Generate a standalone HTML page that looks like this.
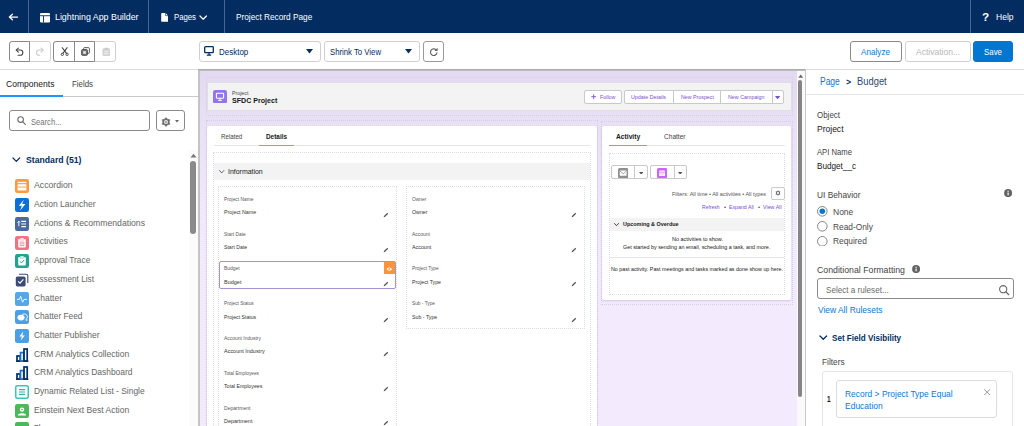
<!DOCTYPE html>
<html lang="en"><head><meta charset="utf-8"><title>Lightning App Builder - Project Record Page</title>
<style>
html,body{margin:0;padding:0;}
body{width:1024px;height:426px;overflow:hidden;position:relative;background:#fff;font-family:"Liberation Sans", sans-serif;}
#app{position:absolute;left:0;top:0;width:1024px;height:426px;overflow:hidden;}
#app div,#app svg,#app span.t{position:absolute;box-sizing:border-box;}
#app span.t{white-space:nowrap;transform-origin:0 0;}
</style></head><body><div id="app">
<div style="left:0px;top:0px;width:1024px;height:33px;background:#032d60;"></div>
<div style="left:28px;top:0px;width:1px;height:33px;background:rgba(255,255,255,.28);"></div>
<div style="left:148px;top:0px;width:1px;height:33px;background:rgba(255,255,255,.28);"></div>
<div style="left:224px;top:0px;width:1px;height:33px;background:rgba(255,255,255,.28);"></div>
<div style="left:970px;top:0px;width:1px;height:33px;background:rgba(255,255,255,.28);"></div>
<svg style="left:8px;top:12.2px;" width="11" height="10" viewBox="0 0 11 10"><path d="M9.6 5H1.6M4.4 2.2L1.4 5L4.4 7.8" fill="none" stroke="#fff" stroke-width="1.25" stroke-linecap="round" stroke-linejoin="round"/></svg>
<svg style="left:39.5px;top:12.5px;" width="10" height="10" viewBox="0 0 10 10"><rect x="0" y="0" width="10" height="9.5" rx="1.2" fill="#fff"/><rect x="0" y="2.3" width="10" height="0.9" fill="#032d60"/><rect x="3" y="3" width="0.9" height="6.5" fill="#032d60"/></svg>
<span id="t0" class="t" style="left:54.5px;top:11.27px;font-size:9.6px;line-height:11.52px;color:#fff;font-weight:400;transform:scaleX(0.9207);">Lightning App Builder</span>
<svg style="left:160.8px;top:13.1px;" width="7.4" height="8.8" viewBox="0 0 8 10"><path d="M1 0H5L8 3V9.2Q8 10 7.2 10H0.8Q0 10 0 9.2V1Q0 0 1 0Z" fill="#fff"/><path d="M5 0V3H8" fill="none" stroke="#032d60" stroke-width="0.7"/></svg>
<span id="t1" class="t" style="left:174px;top:11.27px;font-size:9.6px;line-height:11.52px;color:#fff;font-weight:400;transform:scaleX(0.8087);">Pages</span>
<svg style="left:199.4px;top:14.6px;" width="9" height="6" viewBox="0 0 9 6"><path d="M1 1L4.2 4.2L7.4 1" fill="none" stroke="#fff" stroke-width="1.25" stroke-linecap="round" stroke-linejoin="round"/></svg>
<span id="t2" class="t" style="left:235.5px;top:11.27px;font-size:9.6px;line-height:11.52px;color:#fff;font-weight:400;transform:scaleX(0.8613);">Project Record Page</span>
<span id="t3" class="t" style="left:982.4px;top:10.48px;font-size:11.6px;line-height:13.92px;color:#fff;font-weight:700;transform:scaleX(1.015);">?</span>
<span id="t4" class="t" style="left:995.5px;top:11.27px;font-size:9.6px;line-height:11.52px;color:#fff;font-weight:400;transform:scaleX(0.8868);">Help</span>
<div style="left:0px;top:33px;width:1024px;height:36px;background:#fff;"></div>
<div style="left:0px;top:69px;width:198px;height:1px;background:#dcdcdc;"></div>
<div style="left:806px;top:69px;width:218px;height:1px;background:#dcdcdc;"></div>
<div style="left:8.5px;top:40.5px;width:42.0px;height:21.0px;border:1px solid #d0d0d0;border-radius:3px;background:#fff;"></div>
<div style="left:8.5px;top:40.5px;width:21.5px;height:21.0px;border:1px solid #8a8a8a;border-radius:3px 0 0 3px;background:#fff;"></div>
<svg style="left:14.8px;top:46.8px;" width="9.4" height="9.4" viewBox="0 0 11 11"><path d="M1.6 3.6H6.2A3 3 0 0 1 6.2 9.6H3.6" fill="none" stroke="#444" stroke-width="1.25" stroke-linecap="round"/><path d="M3.9 1.2L1.4 3.6L3.9 6" fill="none" stroke="#444" stroke-width="1.25" stroke-linecap="round" stroke-linejoin="round"/></svg>
<svg style="left:35.3px;top:46.8px;" width="9.4" height="9.4" viewBox="0 0 11 11"><path d="M9.4 3.6H4.8A3 3 0 0 0 4.8 9.6H5.6" fill="none" stroke="#c9c9c9" stroke-width="1.2" stroke-linecap="round"/><path d="M7.1 1.2L9.6 3.6L7.1 6" fill="none" stroke="#c9c9c9" stroke-width="1.2" stroke-linecap="round" stroke-linejoin="round"/></svg>
<div style="left:53px;top:40.5px;width:63px;height:21.0px;border:1px solid #d0d0d0;border-radius:3px;background:#fff;"></div>
<div style="left:53px;top:40.5px;width:42px;height:21.0px;border:1px solid #8a8a8a;border-radius:3px 0 0 3px;background:#fff;"></div>
<div style="left:74px;top:40.5px;width:1px;height:21px;background:#8a8a8a;"></div>
<svg style="left:59.5px;top:46.8px;" width="9.4" height="9.4" viewBox="0 0 11 11"><path d="M2.6 0.8L7.6 7.4M8.4 0.8L3.4 7.4" fill="none" stroke="#444" stroke-width="1.2" stroke-linecap="round"/><circle cx="2.7" cy="8.6" r="1.4" fill="none" stroke="#444" stroke-width="1.1"/><circle cx="8.3" cy="8.6" r="1.4" fill="none" stroke="#444" stroke-width="1.1"/></svg>
<svg style="left:80.6px;top:46.8px;" width="9" height="9" viewBox="0 0 11 11"><rect x="3.2" y="0.8" width="7" height="7" rx="1" fill="#fff" stroke="#444" stroke-width="1.1"/><rect x="0.8" y="3.2" width="7" height="7" rx="1" fill="#777" stroke="#444" stroke-width="1.1"/><rect x="2.6" y="5" width="3.4" height="3.4" fill="#ddd"/></svg>
<svg style="left:101.8px;top:46.6px;" width="8.6" height="9.4" viewBox="0 0 11 12"><rect x="1.2" y="2.2" width="8.6" height="9" rx="1" fill="#d8d8d8" stroke="#c9c9c9" stroke-width="1"/><rect x="3.4" y="0.8" width="4.2" height="2.6" rx="0.6" fill="#c9c9c9"/><path d="M3 6H8M3 8.4H8" stroke="#f3f3f3" stroke-width="0.9"/></svg>
<div style="left:198.5px;top:40.5px;width:122.0px;height:21.0px;border:1px solid #d0d0d0;border-radius:3px;background:#fff;"></div>
<svg style="left:204px;top:46px;" width="10" height="10" viewBox="0 0 10 10"><rect x="0.7" y="0.7" width="8.6" height="6" rx="0.8" fill="none" stroke="#032d60" stroke-width="1.3"/><path d="M5 6.7V8.6M2.8 9.1H7.2" stroke="#032d60" stroke-width="1.2"/></svg>
<span id="t5" class="t" style="left:218.75px;top:45.87px;font-size:9.6px;line-height:11.52px;color:#032d60;font-weight:400;transform:scaleX(0.8309);">Desktop</span>
<svg style="left:305.5px;top:49px;" width="7" height="5" viewBox="0 0 7 5"><path d="M0 0H7L3.5 4.6Z" fill="#032d60"/></svg>
<div style="left:324px;top:40.5px;width:95.5px;height:21.0px;border:1px solid #d0d0d0;border-radius:3px;background:#fff;"></div>
<span id="t6" class="t" style="left:330px;top:45.87px;font-size:9.6px;line-height:11.52px;color:#032d60;font-weight:400;transform:scaleX(0.8081);">Shrink To View</span>
<svg style="left:405px;top:49px;" width="7" height="5" viewBox="0 0 7 5"><path d="M0 0H7L3.5 4.6Z" fill="#032d60"/></svg>
<div style="left:423px;top:40.5px;width:21px;height:21.0px;border:1px solid #9a9a9a;border-radius:3px;background:#fff;"></div>
<svg style="left:428.8px;top:46.6px;" width="9.4" height="9.4" viewBox="0 0 10 10"><path d="M7.6 3.1A3.5 3.5 0 1 0 8.5 6.3" fill="none" stroke="#666" stroke-width="1.25" stroke-linecap="round"/><path d="M9.2 0.8V4.2H5.8Z" fill="#666"/></svg>
<div style="left:849.5px;top:40.5px;width:52.0px;height:21.0px;border:1px solid #8a8a8a;border-radius:3px;background:#fff;"></div>
<span id="t7" class="t" style="left:861px;top:46.37px;font-size:9.6px;line-height:11.52px;color:#0b77d6;font-weight:400;transform:scaleX(0.8494);">Analyze</span>
<div style="left:904.5px;top:40.5px;width:66.0px;height:21.0px;border:1px solid #d0d0d0;border-radius:3px;background:#fff;"></div>
<span id="t8" class="t" style="left:915.5px;top:46.37px;font-size:9.6px;line-height:11.52px;color:#b8b8b8;font-weight:400;transform:scaleX(0.8872);">Activation...</span>
<div style="left:973px;top:40.5px;width:40px;height:21.0px;border:1px solid #0176d3;border-radius:3px;background:#0176d3;"></div>
<span id="t9" class="t" style="left:984px;top:46.37px;font-size:9.6px;line-height:11.52px;color:#fff;font-weight:400;transform:scaleX(0.8229);">Save</span>
<span id="t10" class="t" style="left:6px;top:78.39px;font-size:9.4px;line-height:11.28px;color:#181818;font-weight:400;transform:scaleX(0.9124);">Components</span>
<span id="t11" class="t" style="left:71.5px;top:78.39px;font-size:9.4px;line-height:11.28px;color:#444444;font-weight:400;transform:scaleX(0.8395);">Fields</span>
<div style="left:0px;top:96px;width:198px;height:1px;background:#c9c9c9;"></div>
<div style="left:0px;top:95px;width:63px;height:2px;background:#1b96ff;"></div>
<div style="left:8.5px;top:109.8px;width:141.5px;height:21.60000000000001px;border:1px solid #8a8a8a;border-radius:3px;background:#fff;"></div>
<svg style="left:16.5px;top:116.4px;" width="9" height="9" viewBox="0 0 9 9"><circle cx="3.6" cy="3.6" r="2.8" fill="none" stroke="#6b6b6b" stroke-width="1.1"/><path d="M5.7 5.7L8.3 8.3" stroke="#6b6b6b" stroke-width="1.2" stroke-linecap="round"/></svg>
<span id="t12" class="t" style="left:30.5px;top:115.59px;font-size:9.4px;line-height:11.28px;color:#747474;font-weight:400;transform:scaleX(0.8127);">Search...</span>
<div style="left:155.5px;top:109.8px;width:29.5px;height:21.60000000000001px;border:1px solid #8a8a8a;border-radius:3px;background:#fff;"></div>
<svg style="left:161.1px;top:116.6px;" width="10" height="10" viewBox="0 0 10 10"><polygon points="5.00,0.50 6.55,2.32 8.90,2.75 8.10,5.00 8.90,7.25 6.55,7.68 5.00,9.50 3.45,7.68 1.10,7.25 1.90,5.00 1.10,2.75 3.45,2.32" fill="#6b6b6b" stroke="#6b6b6b" stroke-width="0.6" stroke-linejoin="round"/><circle cx="5" cy="5" r="2" fill="#fff"/><circle cx="5" cy="5" r="0.9" fill="none" stroke="#6b6b6b" stroke-width="0.7"/></svg>
<svg style="left:174.6px;top:120.3px;" width="4" height="2.6" viewBox="0 0 4 2.6"><path d="M0 0H4L2 2.6Z" fill="#666"/></svg>
<svg style="left:11.8px;top:157.3px;" width="9" height="6" viewBox="0 0 9 6"><path d="M1 1L4.3 4.3L7.6 1" fill="none" stroke="#032d60" stroke-width="1.2" stroke-linecap="round" stroke-linejoin="round"/></svg>
<span id="t13" class="t" style="left:26px;top:154.39px;font-size:9.4px;line-height:11.28px;color:#032d60;font-weight:700;transform:scaleX(0.9262);">Standard (51)</span>
<div style="left:189px;top:150px;width:9px;height:276px;background:#fbfbfb;"></div>
<svg style="left:189.8px;top:153.2px;" width="7" height="5" viewBox="0 0 7 5"><path d="M0.5 4.5L3.5 0.8L6.5 4.5Z" fill="#777"/></svg>
<div style="left:190px;top:161px;width:6.4px;height:72.6px;background:#8a8a8a;border-radius:3.2px;"></div>
<svg style="left:15px;top:179.4px;" width="14" height="14" viewBox="0 0 14 14"><rect x="0" y="0" width="14" height="14" rx="2.2" fill="#ff9a3c"/><rect x="2.6" y="2.8" width="8.8" height="1.3" fill="#fff"/><rect x="2.6" y="5.2" width="8.8" height="6.2" rx="0.5" fill="#fff"/><rect x="2.6" y="7.6" width="8.8" height="0.9" fill="#ff9a3c"/></svg>
<span id="t14" class="t" style="left:34px;top:179.39px;font-size:9.4px;line-height:11.28px;color:#666;font-weight:400;transform:scaleX(0.928);">Accordion</span>
<svg style="left:15px;top:198.1px;" width="14" height="14" viewBox="0 0 14 14"><rect x="0" y="0" width="14" height="14" rx="2.2" fill="#0b6fd8"/><path d="M8.8 1.8L3.8 7.8H6.8L5.2 12.4L10.4 6H7.2Z" fill="#fff"/></svg>
<span id="t15" class="t" style="left:34px;top:198.08px;font-size:9.4px;line-height:11.28px;color:#666;font-weight:400;transform:scaleX(0.909);">Action Launcher</span>
<svg style="left:15px;top:216.8px;" width="14" height="14" viewBox="0 0 14 14"><rect x="0" y="0" width="14" height="14" rx="2.2" fill="#4a699d"/><path d="M6.3 4.4H11M6.3 7H11M6.3 9.6H11" stroke="#fff" stroke-width="1.1"/><path d="M3.8 4.2V9.2M2.6 5.6L3.8 4.2L5 5.6" fill="none" stroke="#fff" stroke-width="0.9"/></svg>
<span id="t16" class="t" style="left:34px;top:216.77px;font-size:9.4px;line-height:11.28px;color:#666;font-weight:400;transform:scaleX(0.9221);">Actions &amp; Recommendations</span>
<svg style="left:15px;top:235.5px;" width="14" height="14" viewBox="0 0 14 14"><rect x="0" y="0" width="14" height="14" rx="2.2" fill="#ef7385"/><rect x="3.2" y="3" width="7.6" height="8.4" rx="0.8" fill="#fff"/><rect x="5" y="2" width="4" height="2" rx="0.5" fill="#fff" stroke="#ef7385" stroke-width="0.5"/><path d="M4.6 6.2H9.4M4.6 7.9H9.4M4.6 9.6H9.4" stroke="#ef7385" stroke-width="0.8"/></svg>
<span id="t17" class="t" style="left:34px;top:235.46px;font-size:9.4px;line-height:11.28px;color:#666;font-weight:400;transform:scaleX(0.9135);">Activities</span>
<svg style="left:15px;top:254.2px;" width="14" height="14" viewBox="0 0 14 14"><rect x="0" y="0" width="14" height="14" rx="2.2" fill="#1fa58f"/><rect x="3.2" y="3" width="7.6" height="8.4" rx="0.8" fill="#fff"/><rect x="5" y="2" width="4" height="2" rx="0.5" fill="#fff" stroke="#1fa58f" stroke-width="0.5"/><path d="M5 7.4L6.5 8.9L9.2 6" fill="none" stroke="#1fa58f" stroke-width="1"/></svg>
<span id="t18" class="t" style="left:34px;top:254.15px;font-size:9.4px;line-height:11.28px;color:#666;font-weight:400;transform:scaleX(0.8944);">Approval Trace</span>
<svg style="left:15px;top:272.8px;" width="14" height="14" viewBox="0 0 14 14"><path d="M4 1.2H11.2Q12.8 1.2 12.8 2.8V10" fill="none" stroke="#3a4b79" stroke-width="1.1"/><rect x="0.8" y="3.6" width="9.8" height="9.8" rx="1.6" fill="#3a4b79"/><path d="M3.2 8.4L5 10.2L8.4 6.4" fill="none" stroke="#fff" stroke-width="1.2"/></svg>
<span id="t19" class="t" style="left:34px;top:272.84px;font-size:9.4px;line-height:11.28px;color:#666;font-weight:400;transform:scaleX(0.8789);">Assessment List</span>
<svg style="left:15px;top:291.5px;" width="14" height="14" viewBox="0 0 14 14"><rect x="0" y="0" width="14" height="14" rx="2.2" fill="#55a7ea"/><path d="M2 7.4H4.4L5.6 4.2L7.6 10.2L9 7.4H12" fill="none" stroke="#fff" stroke-width="0.9" stroke-linejoin="round"/></svg>
<span id="t20" class="t" style="left:34px;top:291.53px;font-size:9.4px;line-height:11.28px;color:#666;font-weight:400;transform:scaleX(0.9106);">Chatter</span>
<svg style="left:15px;top:310.2px;" width="14" height="14" viewBox="0 0 14 14"><rect x="0" y="0" width="14" height="14" rx="2.2" fill="#4b9fe6"/><ellipse cx="6" cy="7.6" rx="3.6" ry="2.8" fill="#fff"/><path d="M7.2 4.4A3.4 2.8 0 0 1 11.6 8.6L12 10.4L10.4 9.8" fill="none" stroke="#fff" stroke-width="0.9"/></svg>
<span id="t21" class="t" style="left:34px;top:310.22px;font-size:9.4px;line-height:11.28px;color:#666;font-weight:400;transform:scaleX(0.8845);">Chatter Feed</span>
<svg style="left:15px;top:328.9px;" width="14" height="14" viewBox="0 0 14 14"><rect x="0" y="0" width="14" height="14" rx="2.2" fill="#4b9fe6"/><path d="M8.2 2.6L4.4 7.6H6.8L5.8 11.4L9.8 6.4H7.4Z" fill="#fff"/></svg>
<span id="t22" class="t" style="left:34px;top:328.91px;font-size:9.4px;line-height:11.28px;color:#666;font-weight:400;transform:scaleX(0.9042);">Chatter Publisher</span>
<svg style="left:15px;top:347.6px;" width="14" height="14" viewBox="0 0 14 14"><path d="M1 13.2H13.4" stroke="#032d60" stroke-width="1.3"/><rect x="2" y="8" width="3.2" height="5" fill="none" stroke="#032d60" stroke-width="1.7"/><rect x="5.5" y="4.6" width="3.2" height="8.4" fill="#fff" stroke="#1b6fd0" stroke-width="1.7"/><rect x="9" y="1" width="3.2" height="12" fill="none" stroke="#032d60" stroke-width="1.7"/></svg>
<span id="t23" class="t" style="left:34px;top:347.6px;font-size:9.4px;line-height:11.28px;color:#666;font-weight:400;transform:scaleX(0.909);">CRM Analytics Collection</span>
<svg style="left:15px;top:366.3px;" width="14" height="14" viewBox="0 0 14 14"><path d="M1 13.2H13.4" stroke="#032d60" stroke-width="1.3"/><rect x="2" y="8" width="3.2" height="5" fill="none" stroke="#032d60" stroke-width="1.7"/><rect x="5.5" y="4.6" width="3.2" height="8.4" fill="#fff" stroke="#1b6fd0" stroke-width="1.7"/><rect x="9" y="1" width="3.2" height="12" fill="none" stroke="#032d60" stroke-width="1.7"/></svg>
<span id="t24" class="t" style="left:34px;top:366.29px;font-size:9.4px;line-height:11.28px;color:#666;font-weight:400;transform:scaleX(0.9002);">CRM Analytics Dashboard</span>
<svg style="left:15px;top:385.0px;" width="14" height="14" viewBox="0 0 14 14"><rect x="0" y="0" width="14" height="14" rx="2.2" fill="#3cc4b6"/><rect x="1.5" y="1.5" width="11" height="11" rx="1" fill="#fff"/><path d="M4 4.6H10M4 7H10M4 9.4H10" stroke="#2bb3a5" stroke-width="1.1"/></svg>
<span id="t25" class="t" style="left:34px;top:384.98px;font-size:9.4px;line-height:11.28px;color:#666;font-weight:400;transform:scaleX(0.9001);">Dynamic Related List - Single</span>
<svg style="left:15px;top:403.7px;" width="14" height="14" viewBox="0 0 14 14"><rect x="0" y="0" width="14" height="14" rx="2.2" fill="#4bb85a"/><circle cx="7" cy="5.6" r="2.2" fill="#fff"/><circle cx="7" cy="5.6" r="0.8" fill="#4bb85a"/><path d="M3 10.6Q7 8 11 10.6V11.6H3Z" fill="#fff"/></svg>
<span id="t26" class="t" style="left:34px;top:403.67px;font-size:9.4px;line-height:11.28px;color:#666;font-weight:400;transform:scaleX(0.9088);">Einstein Next Best Action</span>
<svg style="left:15px;top:422.4px;" width="14" height="14" viewBox="0 0 14 14"><rect x="0" y="0" width="14" height="14" rx="2.2" fill="#4bb85a"/></svg>
<span id="t27" class="t" style="left:34px;top:422.36px;font-size:9.4px;line-height:11.28px;color:#666;font-weight:400;transform:scaleX(0.8082);">Flow</span>
<div style="left:198px;top:69px;width:608px;height:357px;background:linear-gradient(to bottom,#e3d9f0 0px,#e5dcf2 20px,#e9e1f5 60px,#f0e7fb 130px,#f3ebfd 200px,#f3ebfd 100%);"></div>
<div style="left:198px;top:69px;width:2px;height:357px;background:#c4c4c4;"></div>
<div style="left:198px;top:69px;width:608px;height:2.4px;background:linear-gradient(to bottom,#a2a2a2,#c8c8c8);"></div>
<div style="left:797px;top:71px;width:8px;height:355px;background:#fafafa;"></div>
<div style="left:805px;top:69px;width:1.3px;height:357px;background:#c8c8c8;"></div>
<svg style="left:798.3px;top:74px;" width="5.4" height="4" viewBox="0 0 5.4 4"><path d="M0.3 3.7L2.7 0.5L5.1 3.7Z" fill="#666"/></svg>
<div style="left:798.4px;top:80px;width:3.8px;height:317px;background:#858585;border-radius:2px;"></div>
<div style="left:205.5px;top:77px;width:587.0px;height:38.5px;border:1px dotted #d4cfe8;"></div>
<div style="left:206.5px;top:82px;width:585px;height:28.5px;background:#f3f3f3;border:1px solid #e0dde6;border-radius:2px;"></div>
<svg style="left:213px;top:89.6px;" width="14" height="13.6" viewBox="0 0 14 13.6"><rect width="14" height="13.6" rx="2.2" fill="#9274ec"/><rect x="3.4" y="3.2" width="7.2" height="5" rx="0.6" fill="none" stroke="#fff" stroke-width="1.1"/><path d="M7 8.4V10M5.2 10.4H8.8" stroke="#fff" stroke-width="1"/></svg>
<span id="t28" class="t" style="left:232px;top:89.96px;font-size:5.6px;line-height:6.72px;color:#444;font-weight:400;transform:scaleX(0.9413);">Project</span>
<span id="t29" class="t" style="left:232px;top:95.83px;font-size:8px;line-height:9.6px;color:#181818;font-weight:700;transform:scaleX(0.8861);">SFDC Project</span>
<div style="left:583.7px;top:90.2px;width:38.59999999999991px;height:13.4px;background:#fff;border:1px solid #c9c9c9;border-radius:2px;"></div>
<svg style="left:591px;top:94.2px;" width="5.4" height="5.4" viewBox="0 0 5.4 5.4"><path d="M2.7 0.3V5.1M0.3 2.7H5.1" stroke="#7a4fd0" stroke-width="0.9"/></svg>
<span id="t30" class="t" style="left:599.6px;top:93.56px;font-size:5.6px;line-height:6.72px;color:#7a4fd0;font-weight:400;transform:scaleX(0.9523);">Follow</span>
<div style="left:624.3px;top:90.2px;width:160.10000000000002px;height:13.4px;background:#fff;border:1px solid #c9c9c9;border-radius:2px;"></div>
<div style="left:673.3px;top:90.2px;width:0.8px;height:13.4px;background:#c9c9c9;"></div>
<div style="left:720.4px;top:90.2px;width:0.8px;height:13.4px;background:#c9c9c9;"></div>
<div style="left:771.5px;top:90.2px;width:0.8px;height:13.4px;background:#c9c9c9;"></div>
<span id="t31" class="t" style="left:631.2px;top:93.56px;font-size:5.6px;line-height:6.72px;color:#7a4fd0;font-weight:400;transform:scaleX(0.9536);">Update Details</span>
<span id="t32" class="t" style="left:680.6px;top:93.56px;font-size:5.6px;line-height:6.72px;color:#7a4fd0;font-weight:400;transform:scaleX(0.9446);">New Prospect</span>
<span id="t33" class="t" style="left:727.9px;top:93.56px;font-size:5.6px;line-height:6.72px;color:#7a4fd0;font-weight:400;transform:scaleX(0.9542);">New Campaign</span>
<svg style="left:775.4px;top:95.6px;" width="5.2" height="3.4" viewBox="0 0 5.2 3.4"><path d="M0 0H5.2L2.6 3.4Z" fill="#7a4fd0"/></svg>
<div style="left:205.5px;top:120px;width:392.0px;height:320px;border:1px dotted #d4cfe8;"></div>
<div style="left:206.5px;top:126px;width:390px;height:310px;background:#fff;border-radius:2px;box-shadow:0 1px 2px rgba(90,70,140,.18);"></div>
<span id="t34" class="t" style="left:220.5px;top:132.96px;font-size:6.6px;line-height:7.92px;color:#444;font-weight:400;transform:scaleX(0.9369);">Related</span>
<span id="t35" class="t" style="left:266px;top:132.96px;font-size:6.6px;line-height:7.92px;color:#181818;font-weight:700;transform:scaleX(0.9711);">Details</span>
<div style="left:213.5px;top:145.4px;width:376px;height:0.8px;background:#e5e5e5;"></div>
<div style="left:258.5px;top:144.6px;width:35.5px;height:1.2px;background:#a48be4;"></div>
<div style="left:213px;top:152px;width:377.5px;height:288px;border:1px dotted #d9ddeb;"></div>
<div style="left:214px;top:163px;width:375.5px;height:16.5px;background:#f3f3f3;"></div>
<svg style="left:219.4px;top:169.6px;" width="5.4" height="3.6" viewBox="0 0 5.4 3.6"><path d="M0.5 0.5L2.7 2.9L4.9 0.5" fill="none" stroke="#444" stroke-width="0.8" stroke-linecap="round"/></svg>
<span id="t36" class="t" style="left:228px;top:167.91px;font-size:7.2px;line-height:8.64px;color:#181818;font-weight:400;transform:scaleX(0.9661);">Information</span>
<div style="left:218px;top:186px;width:179px;height:254px;border:1px dotted #d9ddeb;"></div>
<div style="left:406px;top:186px;width:179px;height:143px;border:1px dotted #d9ddeb;"></div>
<span id="t37" class="t" style="left:224.3px;top:196.12px;font-size:5.5px;line-height:6.6px;color:#585858;font-weight:400;transform:scaleX(0.8836);">Project Name</span>
<span id="t38" class="t" style="left:224.3px;top:209.22px;font-size:6px;line-height:7.2px;color:#333;font-weight:400;transform:scaleX(0.8856);">Project Name</span>
<svg style="left:383px;top:211.5px;" width="6" height="6" viewBox="0 0 6 6"><path d="M0.7 5.3L1 4.1L4.3 0.8L5.2 1.7L1.9 5Z" fill="#555"/></svg>
<span id="t39" class="t" style="left:224.3px;top:231.12px;font-size:5.5px;line-height:6.6px;color:#585858;font-weight:400;transform:scaleX(0.8762);">Start Date</span>
<span id="t40" class="t" style="left:224.3px;top:244.22px;font-size:6px;line-height:7.2px;color:#333;font-weight:400;transform:scaleX(0.8588);">Start Date</span>
<svg style="left:383px;top:246.5px;" width="6" height="6" viewBox="0 0 6 6"><path d="M0.7 5.3L1 4.1L4.3 0.8L5.2 1.7L1.9 5Z" fill="#555"/></svg>
<span id="t41" class="t" style="left:224.3px;top:265.32px;font-size:5.5px;line-height:6.6px;color:#585858;font-weight:400;transform:scaleX(0.9004);">Budget</span>
<span id="t42" class="t" style="left:224.3px;top:278.82px;font-size:6px;line-height:7.2px;color:#333;font-weight:400;transform:scaleX(0.9169);">Budget</span>
<svg style="left:383px;top:281.1px;" width="6" height="6" viewBox="0 0 6 6"><path d="M0.7 5.3L1 4.1L4.3 0.8L5.2 1.7L1.9 5Z" fill="#555"/></svg>
<span id="t43" class="t" style="left:224.3px;top:300.42px;font-size:5.5px;line-height:6.6px;color:#585858;font-weight:400;transform:scaleX(0.8672);">Project Status</span>
<span id="t44" class="t" style="left:224.3px;top:314.22px;font-size:6px;line-height:7.2px;color:#333;font-weight:400;transform:scaleX(0.8619);">Project Status</span>
<svg style="left:383px;top:316.5px;" width="6" height="6" viewBox="0 0 6 6"><path d="M0.7 5.3L1 4.1L4.3 0.8L5.2 1.7L1.9 5Z" fill="#555"/></svg>
<span id="t45" class="t" style="left:224.3px;top:335.32px;font-size:5.5px;line-height:6.6px;color:#585858;font-weight:400;transform:scaleX(0.9007);">Account Industry</span>
<span id="t46" class="t" style="left:224.3px;top:348.22px;font-size:6px;line-height:7.2px;color:#333;font-weight:400;transform:scaleX(0.9105);">Account Industry</span>
<svg style="left:383px;top:350.5px;" width="6" height="6" viewBox="0 0 6 6"><path d="M0.7 5.3L1 4.1L4.3 0.8L5.2 1.7L1.9 5Z" fill="#555"/></svg>
<span id="t47" class="t" style="left:224.3px;top:370.12px;font-size:5.5px;line-height:6.6px;color:#585858;font-weight:400;transform:scaleX(0.8672);">Total Employees</span>
<span id="t48" class="t" style="left:224.3px;top:383.22px;font-size:6px;line-height:7.2px;color:#333;font-weight:400;transform:scaleX(0.8698);">Total Employees</span>
<svg style="left:383px;top:385.5px;" width="6" height="6" viewBox="0 0 6 6"><path d="M0.7 5.3L1 4.1L4.3 0.8L5.2 1.7L1.9 5Z" fill="#555"/></svg>
<span id="t49" class="t" style="left:224.3px;top:404.52px;font-size:5.5px;line-height:6.6px;color:#585858;font-weight:400;transform:scaleX(0.9217);">Department</span>
<span id="t50" class="t" style="left:224.3px;top:417.82px;font-size:6px;line-height:7.2px;color:#333;font-weight:400;transform:scaleX(0.9056);">Department</span>
<svg style="left:383px;top:420.1px;" width="6" height="6" viewBox="0 0 6 6"><path d="M0.7 5.3L1 4.1L4.3 0.8L5.2 1.7L1.9 5Z" fill="#555"/></svg>
<span id="t51" class="t" style="left:412px;top:196.12px;font-size:5.5px;line-height:6.6px;color:#585858;font-weight:400;transform:scaleX(0.8795);">Owner</span>
<span id="t52" class="t" style="left:412px;top:209.22px;font-size:6px;line-height:7.2px;color:#333;font-weight:400;transform:scaleX(0.8771);">Owner</span>
<svg style="left:571px;top:211.5px;" width="6" height="6" viewBox="0 0 6 6"><path d="M0.7 5.3L1 4.1L4.3 0.8L5.2 1.7L1.9 5Z" fill="#555"/></svg>
<span id="t53" class="t" style="left:412px;top:231.12px;font-size:5.5px;line-height:6.6px;color:#585858;font-weight:400;transform:scaleX(0.9057);">Account</span>
<span id="t54" class="t" style="left:412px;top:244.22px;font-size:6px;line-height:7.2px;color:#333;font-weight:400;transform:scaleX(0.8876);">Account</span>
<svg style="left:571px;top:246.5px;" width="6" height="6" viewBox="0 0 6 6"><path d="M0.7 5.3L1 4.1L4.3 0.8L5.2 1.7L1.9 5Z" fill="#555"/></svg>
<span id="t55" class="t" style="left:412px;top:265.32px;font-size:5.5px;line-height:6.6px;color:#585858;font-weight:400;transform:scaleX(0.8775);">Project Type</span>
<span id="t56" class="t" style="left:412px;top:278.82px;font-size:6px;line-height:7.2px;color:#333;font-weight:400;transform:scaleX(0.8722);">Project Type</span>
<svg style="left:571px;top:281.1px;" width="6" height="6" viewBox="0 0 6 6"><path d="M0.7 5.3L1 4.1L4.3 0.8L5.2 1.7L1.9 5Z" fill="#555"/></svg>
<span id="t57" class="t" style="left:412px;top:300.42px;font-size:5.5px;line-height:6.6px;color:#585858;font-weight:400;transform:scaleX(0.8679);">Sub - Type</span>
<span id="t58" class="t" style="left:412px;top:314.22px;font-size:6px;line-height:7.2px;color:#333;font-weight:400;transform:scaleX(0.873);">Sub - Type</span>
<svg style="left:571px;top:316.5px;" width="6" height="6" viewBox="0 0 6 6"><path d="M0.7 5.3L1 4.1L4.3 0.8L5.2 1.7L1.9 5Z" fill="#555"/></svg>
<div style="left:219px;top:261px;width:176.8px;height:27.8px;border:1.3px solid #a892d4;border-radius:2px;"></div>
<div style="left:383.6px;top:262.4px;width:11.6px;height:11.4px;background:#fe9339;"></div>
<svg style="left:386px;top:267.2px;" width="6.4" height="4.2" viewBox="0 0 7.6 5"><path d="M0.4 2.5Q3.8 -1.2 7.2 2.5Q3.8 6.2 0.4 2.5Z" fill="#fff"/><circle cx="3.8" cy="2.5" r="1.1" fill="#fe9339"/></svg>
<div style="left:600.5px;top:120.5px;width:192.29999999999995px;height:184.89999999999998px;border:1px dotted #d4cfe8;"></div>
<div style="left:602.3px;top:126.3px;width:189.2px;height:173.8px;background:#fff;border-radius:2px;box-shadow:0 1px 2px rgba(90,70,140,.22);"></div>
<span id="t59" class="t" style="left:615.9px;top:132.94px;font-size:6.8px;line-height:8.16px;color:#181818;font-weight:700;transform:scaleX(0.9852);">Activity</span>
<span id="t60" class="t" style="left:663.7px;top:133.06px;font-size:6.6px;line-height:7.92px;color:#444;font-weight:400;transform:scaleX(0.9942);">Chatter</span>
<div style="left:609px;top:145.4px;width:175.8px;height:0.8px;background:#e5e5e5;"></div>
<div style="left:609px;top:144.6px;width:38px;height:1.2px;background:#a48be4;"></div>
<div style="left:609px;top:153px;width:176px;height:141.8px;border:1px dotted #d9ddeb;"></div>
<div style="left:611.3px;top:165.2px;width:36.5px;height:13.7px;background:#fff;border:1px solid #c9c9c9;border-radius:2px;"></div>
<div style="left:634px;top:165.2px;width:0.8px;height:13.7px;background:#c9c9c9;"></div>
<svg style="left:639.0px;top:171.5px;" width="4.4" height="2.8" viewBox="0 0 4.4 2.8"><path d="M0 0H4.4L2.2 2.8Z" fill="#555"/></svg>
<div style="left:650px;top:165.2px;width:37px;height:13.7px;background:#fff;border:1px solid #c9c9c9;border-radius:2px;"></div>
<div style="left:673.7px;top:165.2px;width:0.8px;height:13.7px;background:#c9c9c9;"></div>
<svg style="left:678.45px;top:171.5px;" width="4.4" height="2.8" viewBox="0 0 4.4 2.8"><path d="M0 0H4.4L2.2 2.8Z" fill="#555"/></svg>
<svg style="left:618px;top:167.8px;" width="10.4" height="10.2" viewBox="0 0 10.4 10.2"><rect width="10.4" height="10.2" rx="1.6" fill="#8f8f8f"/><rect x="1.8" y="2.6" width="6.8" height="5.2" rx="0.6" fill="#fff"/><path d="M2 3L5.2 5.8L8.4 3" fill="none" stroke="#8f8f8f" stroke-width="0.8"/></svg>
<svg style="left:657px;top:167.8px;" width="10.2" height="10.2" viewBox="0 0 10.2 10.2"><rect width="10.2" height="10.2" rx="1.6" fill="#cb65ff"/><rect x="2.2" y="2.6" width="5.8" height="5.4" rx="0.6" fill="#fff"/><path d="M2.2 4.2H8" stroke="#cb65ff" stroke-width="0.7"/><path d="M3.4 5.6H6.8M3.4 6.8H6.8" stroke="#e4b0ff" stroke-width="0.6"/></svg>
<span id="t61" class="t" style="left:671.6px;top:190.88px;font-size:5.4px;line-height:6.48px;color:#555;font-weight:400;transform:scaleX(1.0146);">Filters: All time • All activities • All types</span>
<div style="left:771px;top:187px;width:13.6px;height:12.6px;background:#fff;border:1px solid #c9c9c9;border-radius:2px;"></div>
<svg style="left:774.9px;top:190.4px;" width="6" height="6" viewBox="0 0 6 6"><polygon points="3.00,0.20 3.95,1.35 5.42,1.60 4.90,3.00 5.42,4.40 3.95,4.65 3.00,5.80 2.05,4.65 0.58,4.40 1.10,3.00 0.58,1.60 2.05,1.35" fill="#6b6b6b"/><circle cx="3" cy="3" r="1.2" fill="#fff"/><circle cx="3" cy="3" r="0.5" fill="#6b6b6b"/></svg>
<span id="t62" class="t" style="left:702.2px;top:204.28px;font-size:5.4px;line-height:6.48px;color:#7a4fd0;font-weight:400;transform:scaleX(0.9317);">Refresh</span>
<span id="t63" class="t" style="left:724px;top:204.28px;font-size:5.4px;line-height:6.48px;color:#444;font-weight:400;transform:scaleX(1.0579);">•</span>
<span id="t64" class="t" style="left:729.2px;top:204.28px;font-size:5.4px;line-height:6.48px;color:#7a4fd0;font-weight:400;transform:scaleX(0.9731);">Expand All</span>
<span id="t65" class="t" style="left:758px;top:204.28px;font-size:5.4px;line-height:6.48px;color:#444;font-weight:400;transform:scaleX(1.0579);">•</span>
<span id="t66" class="t" style="left:763.4px;top:204.28px;font-size:5.4px;line-height:6.48px;color:#7a4fd0;font-weight:400;transform:scaleX(0.9903);">View All</span>
<div style="left:610px;top:218px;width:174.4px;height:12.5px;background:#f3f3f3;"></div>
<svg style="left:614px;top:222.6px;" width="5" height="3.4" viewBox="0 0 5 3.4"><path d="M0.5 0.5L2.5 2.7L4.5 0.5" fill="none" stroke="#181818" stroke-width="0.8" stroke-linecap="round"/></svg>
<span id="t67" class="t" style="left:622.75px;top:221.46px;font-size:5.6px;line-height:6.72px;color:#181818;font-weight:700;transform:scaleX(0.9711);">Upcoming &amp; Overdue</span>
<span id="t68" class="t" style="left:671.5px;top:236.26px;font-size:5.6px;line-height:6.72px;color:#181818;font-weight:400;transform:scaleX(0.9764);">No activities to show.</span>
<span id="t69" class="t" style="left:623.4px;top:244.36px;font-size:5.6px;line-height:6.72px;color:#181818;font-weight:400;transform:scaleX(0.9583);">Get started by sending an email, scheduling a task, and more.</span>
<div style="left:610px;top:257.2px;width:174.4px;height:0.7px;background:#e5e5e5;"></div>
<span id="t70" class="t" style="left:611px;top:266.16px;font-size:5.6px;line-height:6.72px;color:#181818;font-weight:400;transform:scaleX(0.956);">No past activity. Past meetings and tasks marked as done show up here.</span>
<div style="left:806.3px;top:70px;width:217.7px;height:356px;background:#fff;"></div>
<span id="t71" class="t" style="left:820px;top:75.62px;font-size:10.2px;line-height:12.24px;color:#0b77d6;font-weight:400;transform:scaleX(0.832);">Page</span>
<span id="t72" class="t" style="left:846px;top:76.93px;font-size:8.5px;line-height:10.2px;color:#032d60;font-weight:700;transform:scaleX(1.0063);">&gt;</span>
<span id="t73" class="t" style="left:857.3px;top:75.62px;font-size:10.2px;line-height:12.24px;color:#2e4a6e;font-weight:400;transform:scaleX(0.9196);">Budget</span>
<div style="left:806.3px;top:94px;width:217.7px;height:1px;background:#e5e5e5;"></div>
<span id="t74" class="t" style="left:817px;top:109.97px;font-size:8.6px;line-height:10.32px;color:#444;font-weight:400;transform:scaleX(0.9258);">Object</span>
<span id="t75" class="t" style="left:817px;top:123.39px;font-size:9.4px;line-height:11.28px;color:#181818;font-weight:400;transform:scaleX(0.9079);">Project</span>
<span id="t76" class="t" style="left:817px;top:146.57px;font-size:8.6px;line-height:10.32px;color:#444;font-weight:400;transform:scaleX(0.8935);">API Name</span>
<span id="t77" class="t" style="left:817px;top:160.19px;font-size:9.4px;line-height:11.28px;color:#181818;font-weight:400;transform:scaleX(0.8697);">Budget__c</span>
<span id="t78" class="t" style="left:817px;top:189.09px;font-size:9.4px;line-height:11.28px;color:#444;font-weight:400;transform:scaleX(0.888);">UI Behavior</span>
<svg style="left:1004.4px;top:189.1px;" width="8.2" height="8.2" viewBox="0 0 8 8"><circle cx="4" cy="4" r="3.9" fill="#646464"/><rect x="3.45" y="3.4" width="1.1" height="2.8" fill="#fff"/><rect x="3.45" y="1.7" width="1.1" height="1.1" fill="#fff"/></svg>
<svg style="left:817px;top:206.2px;" width="10.6" height="10.6" viewBox="0 0 11 11"><circle cx="5.5" cy="5.5" r="5" fill="#fff" stroke="#747474" stroke-width="0.9"/><circle cx="5.5" cy="5.5" r="2.9" fill="#0176d3"/></svg>
<span id="t79" class="t" style="left:832.9px;top:206.39px;font-size:9.4px;line-height:11.28px;color:#4a4a4a;font-weight:400;transform:scaleX(0.9054);">None</span>
<svg style="left:817px;top:221.2px;" width="10.6" height="10.6" viewBox="0 0 11 11"><circle cx="5.5" cy="5.5" r="5" fill="#fff" stroke="#747474" stroke-width="0.9"/></svg>
<span id="t80" class="t" style="left:832.9px;top:221.19px;font-size:9.4px;line-height:11.28px;color:#4a4a4a;font-weight:400;transform:scaleX(0.8904);">Read-Only</span>
<svg style="left:817px;top:235.7px;" width="10.6" height="10.6" viewBox="0 0 11 11"><circle cx="5.5" cy="5.5" r="5" fill="#fff" stroke="#747474" stroke-width="0.9"/></svg>
<span id="t81" class="t" style="left:832.9px;top:235.19px;font-size:9.4px;line-height:11.28px;color:#4a4a4a;font-weight:400;transform:scaleX(0.891);">Required</span>
<span id="t82" class="t" style="left:817px;top:264.39px;font-size:9.4px;line-height:11.28px;color:#444;font-weight:400;transform:scaleX(0.9329);">Conditional Formatting</span>
<svg style="left:912.1px;top:265.29999999999995px;" width="8.2" height="8.2" viewBox="0 0 8 8"><circle cx="4" cy="4" r="3.9" fill="#646464"/><rect x="3.45" y="3.4" width="1.1" height="2.8" fill="#fff"/><rect x="3.45" y="1.7" width="1.1" height="1.1" fill="#fff"/></svg>
<div style="left:817px;top:278.2px;width:196.5px;height:21.30000000000001px;border:1px solid #8a8a8a;border-radius:3px;background:#fff;"></div>
<span id="t83" class="t" style="left:825.6px;top:283.79px;font-size:9.4px;line-height:11.28px;color:#6b6b6b;font-weight:400;transform:scaleX(0.8656);">Select a ruleset...</span>
<svg style="left:998px;top:284px;" width="12" height="12" viewBox="0 0 12 12"><circle cx="5.2" cy="5.2" r="3.6" fill="none" stroke="#666" stroke-width="1.1"/><path d="M7.8 7.8L10.8 10.7" stroke="#666" stroke-width="1.2" stroke-linecap="round"/></svg>
<span id="t84" class="t" style="left:818px;top:303.79px;font-size:9.4px;line-height:11.28px;color:#0b77d6;font-weight:400;transform:scaleX(0.899);">View All Rulesets</span>
<svg style="left:818.6px;top:335.2px;" width="9" height="6" viewBox="0 0 9 6"><path d="M1 1L4.3 4.3L7.6 1" fill="none" stroke="#032d60" stroke-width="1.3" stroke-linecap="round" stroke-linejoin="round"/></svg>
<span id="t85" class="t" style="left:832.4px;top:332.19px;font-size:9.4px;line-height:11.28px;color:#032d60;font-weight:700;transform:scaleX(0.8631);">Set Field Visibility</span>
<span id="t86" class="t" style="left:822.4px;top:356.09px;font-size:9.4px;line-height:11.28px;color:#444;font-weight:400;transform:scaleX(0.8852);">Filters</span>
<div style="left:822.3px;top:371px;width:191px;height:70px;border:1px solid #e5e5e5;border-radius:3px;background:#fff;"></div>
<span id="t87" class="t" style="left:827.4px;top:394.35px;font-size:8.8px;line-height:10.56px;color:#181818;font-weight:700;transform:scaleX(0.7338);">1</span>
<div style="left:836px;top:380px;width:160.5px;height:37.6px;border:1px solid #dcdcdc;border-radius:3px;background:#fff;"></div>
<span id="t88" class="t" style="left:844.8px;top:387.69px;font-size:9.4px;line-height:11.28px;color:#0b77d6;font-weight:400;transform:scaleX(0.9017);">Record &gt; Project Type Equal</span>
<span id="t89" class="t" style="left:844.8px;top:400.19px;font-size:9.4px;line-height:11.28px;color:#0b77d6;font-weight:400;transform:scaleX(0.9064);">Education</span>
<svg style="left:984.3px;top:388.6px;" width="6.4" height="6.4" viewBox="0 0 6.4 6.4"><path d="M0.5 0.5L5.9 5.9M5.9 0.5L0.5 5.9" stroke="#8a8a8a" stroke-width="0.9" stroke-linecap="round"/></svg>
</div></body></html>
